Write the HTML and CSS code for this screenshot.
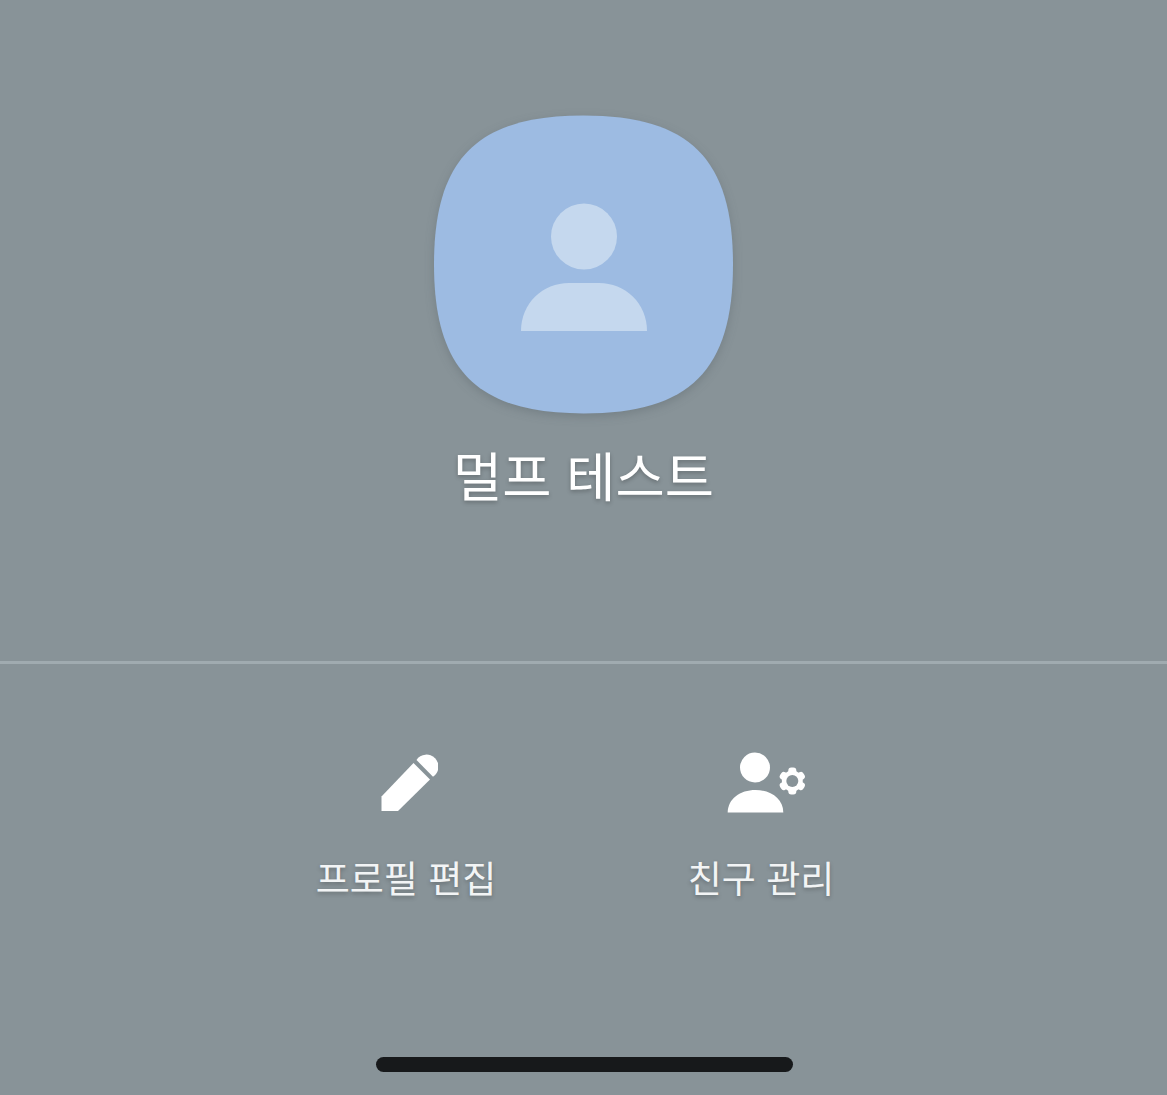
FILE: index.html
```html
<!DOCTYPE html>
<html lang="ko">

<head>
    <meta charset="UTF-8">
    <meta name="viewport" content="width=device-width, initial-scale=1.0">
    <title>프로필</title>
    <link rel="stylesheet" href="styles.css">
</head>

<body>
    <div class="screen">
        <!-- Profile -->
        <div class="profile">
            <svg class="avatar" width="299" height="299" viewBox="0 0 299 299">
                <path d="M149.500 0.500C256 0.500 299 44 299 149.500C299 255 256 298.500 149.500 298.500C43 298.500 0 255 0 149.500C0 44 43 0.500 149.500 0.500Z" fill="#9dbbe2"/>
                <circle cx="150" cy="121.500" r="33" fill="#c5d8ee"/>
                <path d="M87 216C87 188 109 168 135 168H165C191 168 213 188 213 216Z" fill="#c5d8ee"/>
            </svg>
            <div class="profile-name">멀프 테스트</div>
        </div>

        <!-- Actions -->
        <div class="actions">
            <div class="action">
                <svg class="action-icon" width="64" height="62" viewBox="0 0 64 62">
                    <path d="M7.500 59V44.500L39.500 11L56 27.500L24 59Z" fill="#fff"/>
                    <path d="M42.500 8A12 12 0 1 1 59 24.700Z" fill="#fff"/>
                </svg>
                <span class="action-label">프로필 편집</span>
            </div>
            <div class="action">
                <svg class="action-icon" width="90" height="62" viewBox="0 0 90 62">
                    <circle cx="39" cy="15.500" r="15" fill="#fff"/>
                    <path d="M11.700 60.500C11.700 47 24 38 39.500 38C55 38 67.300 47 67.300 60.500Z" fill="#fff"/>
                    <g fill="#fff" transform="translate(76.300 29)">
                        <circle r="10.500"/>
                        <rect x="-4" y="-13.500" width="8" height="27" rx="3"/>
                        <rect x="-4" y="-13.500" width="8" height="27" rx="3" transform="rotate(60)"/>
                        <rect x="-4" y="-13.500" width="8" height="27" rx="3" transform="rotate(120)"/>
                    </g>
                    <circle cx="76.300" cy="29" r="6" fill="#889398"/>
                </svg>
                <span class="action-label">친구 관리</span>
            </div>
        </div>

        <div class="home-bar"></div>
    </div>
</body>

</html>
```

FILE: styles.css
```css
body {
    margin: 0;
    background: #889398;
    font-family: "Noto Sans CJK KR", "Noto Sans", sans-serif;
    color: #fff;
}

.screen {
    height: 1095px;
    display: flex;
    flex-direction: column;
    overflow: hidden;
}

.profile {
    height: 546px;
    padding-top: 115px;
    display: flex;
    flex-direction: column;
    align-items: center;
    border-bottom: 3px solid #a0abb0;
}

.avatar {
    display: block;
    overflow: visible;
    filter: drop-shadow(0 3px 5px rgba(60, 70, 80, 0.25));
}

.profile-name {
    margin-top: 20px;
    font-size: 53.500px;
    line-height: 80px;
    text-shadow: 0 2px 4px rgba(0, 0, 0, 0.25);
}

.actions {
    margin-top: 88px;
    display: grid;
    grid-template-columns: 355px 355px;
    justify-content: center;
}

.action {
    display: flex;
    flex-direction: column;
    align-items: center;
}

.action-icon {
    display: block;
}

.action-label {
    margin-top: 35px;
    font-size: 37px;
    line-height: 56px;
    color: #f2f4f5;
    text-shadow: 0 2px 4px rgba(0, 0, 0, 0.25);
}

.home-bar {
    width: 417px;
    height: 15px;
    margin: auto 374px 23px 376px;
    border-radius: 8px;
    background: #17191b;
}
```
